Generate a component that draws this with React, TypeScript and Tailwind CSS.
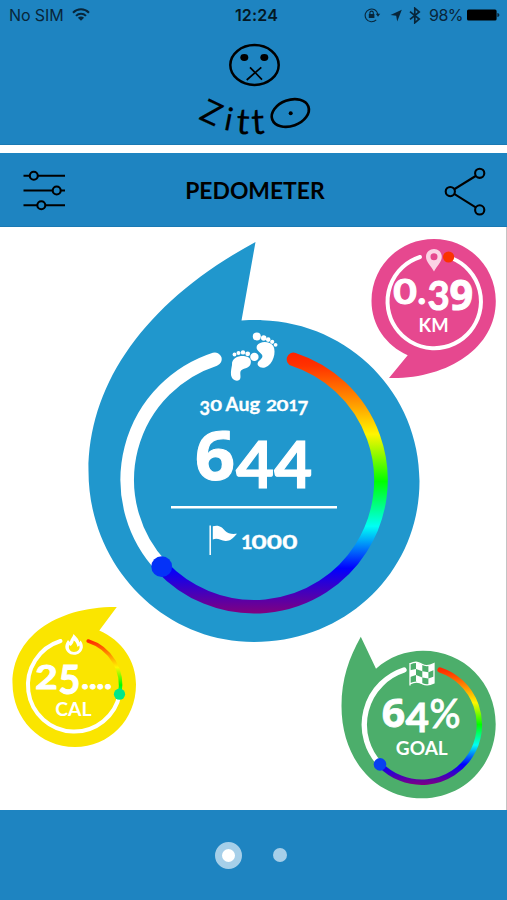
import type { ReactNode } from "react";

type Glyph = { c: string; x: number; base: number; h: number; w: number };

/** Numbers with old-style figures: every figure has its own height and baseline. */
function Figures({ glyphs, bold = 0.6 }: { glyphs: Glyph[]; bold?: number }) {
  return (
    <text fill="#fff" stroke="#fff" strokeWidth={bold} className="font-['Lato',sans-serif] font-bold">
      {glyphs.map((g, i) => (
        <tspan
          key={i}
          x={g.x}
          y={g.base}
          fontSize={g.h / 0.73}
          textLength={g.w}
          lengthAdjust="spacingAndGlyphs"
          className={g.c === "6" || g.c === "9" ? "font-['Open_Sans',sans-serif]" : undefined}
        >
          {g.c}
        </tspan>
      ))}
    </text>
  );
}

function Label({ x, y, size, width, children }: { x: number; y: number; size: number; width: number; children: string }) {
  return (
    <text
      x={x}
      y={y}
      fontSize={size}
      textLength={width}
      lengthAdjust="spacingAndGlyphs"
      fill="#fff"
      className="font-['Lato',sans-serif] font-bold"
    >
      {children}
    </text>
  );
}

function Rainbow({ id, top, bottom }: { id: string; top: number; bottom: number }) {
  return (
    <linearGradient id={id} gradientUnits="userSpaceOnUse" x1="0" x2="0" y1={top} y2={bottom}>
      <stop offset="0" stopColor="#ff1e00" />
      <stop offset="0.06" stopColor="#ff3200" />
      <stop offset="0.17" stopColor="#ff8000" />
      <stop offset="0.32" stopColor="#fff500" />
      <stop offset="0.5" stopColor="#00ff00" />
      <stop offset="0.67" stopColor="#00fff5" />
      <stop offset="0.83" stopColor="#0000ff" />
      <stop offset="1" stopColor="#800080" />
    </linearGradient>
  );
}

function Bubble({ className, viewBox, children }: { className: string; viewBox: string; children: ReactNode }) {
  return (
    <svg className={`absolute ${className}`} viewBox={viewBox} fill="none">
      {children}
    </svg>
  );
}

function StepsBubble() {
  return (
    <Bubble className="left-[80px] top-[8px] h-[415px] w-[350px]" viewBox="80 235 350 415">
      <defs>
        <Rainbow id="steps" top={350} bottom={613} />
      </defs>
      <path
        fill="#2097cd"
        d="M255.5 242 241.5 320.5C250 320 258 320 262 320.2C350 323 419.5 394 419.5 481C419.5 572 346 642 254 642C162 642 88.5 565 88.5 471C88.5 383 146 301 255.5 242Z"
      />
      <g strokeWidth="13.6">
        <path stroke="#fff" strokeLinecap="round" d="M214.9 359.2A126.8 126.8 0 0 0 161.5 566.5" />
        <path stroke="url(#steps)" strokeLinecap="round" d="M293.5 359.4A126.8 126.8 0 1 1 161.5 566.5" />
      </g>
      <circle cx="161.7" cy="566.7" r="10.4" fill="#0432f8" />
      <g fill="#fff">
        <circle cx="234.5" cy="354.5" r="1.9" />
        <circle cx="238.5" cy="353" r="2" />
        <circle cx="243" cy="352.4" r="2.2" />
        <circle cx="247.7" cy="353.8" r="2.4" />
        <circle cx="254.4" cy="356.9" r="4.2" />
        <path d="M232 365C231.5 357.5 239 355.6 245 356.2C250.5 356.8 252 361 250.2 365C248 369 241.5 368.3 240.5 371.5C239.8 374.5 241.5 377.5 239.5 379.8C236.5 382 232 380 231 375C230.7 371 231.5 368 232 365Z" />
        <circle cx="256.8" cy="336.4" r="4" />
        <circle cx="263.7" cy="338" r="2.7" />
        <circle cx="268.2" cy="339.6" r="2.3" />
        <circle cx="272.2" cy="341.8" r="2.1" />
        <circle cx="275.6" cy="344.8" r="1.9" />
        <path d="M257 345.5C260 340.5 270 340.8 273.3 346C276.5 352 273.5 364.5 265 367.4C260 368.6 256 365.5 258.2 361.8C260.5 359.4 263.8 357.5 261.8 354.5C259.5 351.5 255.3 350 257 345.5Z" />
      </g>
      <Figures
        bold={0.3}
        glyphs={[
          { c: "3", x: 199.5, base: 414.6, h: 13.6, w: 10.5 },
          { c: "0", x: 210.3, base: 411.3, h: 10.8, w: 11.8 },
          { c: " ", x: 222, base: 411.3, h: 13, w: 4 },
          { c: "A", x: 225.6, base: 411.3, h: 13.2, w: 13 },
          { c: "u", x: 238.5, base: 411.3, h: 13.6, w: 11 },
          { c: "g", x: 249.6, base: 411.3, h: 13.6, w: 10.6 },
          { c: " ", x: 260.5, base: 411.3, h: 13, w: 4 },
          { c: "2", x: 266, base: 411.3, h: 10.8, w: 11 },
          { c: "0", x: 276.6, base: 411.3, h: 10.8, w: 12 },
          { c: "1", x: 288.5, base: 411.3, h: 10.8, w: 9.5 },
          { c: "7", x: 297.5, base: 414.6, h: 13.6, w: 10.8 },
        ]}
      />
      <Figures
        bold={1.2}
        glyphs={[
          { c: "6", x: 195, base: 480.2, h: 48.5, w: 40 },
          { c: "4", x: 236, base: 488.4, h: 47, w: 38 },
          { c: "4", x: 274.2, base: 488.4, h: 47, w: 38 },
        ]}
      />
      <path stroke="#fff" strokeWidth="2.6" d="M171 507.2H337" />
      <path stroke="#fff" strokeWidth="1.5" d="M210.2 525.5V555" />
      <path fill="#fff" d="M212.8 526.3C219 524.5 222.5 527.5 225 530.8C228 534 232 534.2 237 533.8C233 538.5 230 541.2 225.5 541C220.5 540.6 218 537.6 212.8 539.5Z" />
      <Figures
        bold={0.4}
        glyphs={[
          { c: "1", x: 241, base: 548.6, h: 14, w: 11.5 },
          { c: "0", x: 251.4, base: 548.6, h: 14, w: 15.2 },
          { c: "0", x: 266.7, base: 548.6, h: 14, w: 15.2 },
          { c: "0", x: 282.3, base: 548.6, h: 14, w: 15.2 },
        ]}
      />
    </Bubble>
  );
}

function DistanceBubble() {
  return (
    <Bubble className="left-[366px] top-[7px] h-[150px] w-[136px]" viewBox="366 234 136 150">
      <path
        fill="#e6488f"
        d="M389 378 407.7 355.2C386 345.5 371.5 325 371.5 301C371.5 266.5 399 239 434 239C468 239 495.8 266.5 495.8 301C495.8 349 446 379.5 389 378Z"
      />
      <path stroke="#fff" strokeWidth="4" strokeLinecap="round" d="M420 257A46.7 46.7 0 1 0 452.5 258.5" />
      <circle cx="448.6" cy="257" r="5.6" fill="#fb3300" />
      <path
        fill="#fbd3e5"
        fillRule="evenodd"
        d="M434 249C429.5 249 426 252.4 426 256.8C426 262 431 266 434 271.5C437 266 441.8 262 441.8 256.8C441.8 252.4 438.5 249 434 249ZM434 253.2A3.5 3.5 0 1 1 434 260.2A3.5 3.5 0 1 1 434 253.2Z"
      />
      <Figures
        bold={1}
        glyphs={[
          { c: "0", x: 393.3, base: 304.1, h: 24.4, w: 23.6 },
          { c: ".", x: 417.5, base: 304, h: 26, w: 8.6 },
          { c: "3", x: 427.6, base: 309.6, h: 29.4, w: 22.2 },
          { c: "9", x: 449.6, base: 309.6, h: 29.8, w: 23.6 },
        ]}
      />
      <Label x={418.6} y={331.5} size={18} width={30}>KM</Label>
    </Bubble>
  );
}

function CaloriesBubble() {
  return (
    <Bubble className="left-[6px] top-[374px] h-[152px] w-[136px]" viewBox="6 601 136 152">
      <defs>
        <Rainbow id="calories" top={636} bottom={734} />
      </defs>
      <path
        fill="#fae500"
        d="M116.8 607 99.3 630.5C122 640.5 136 661 136 684.5C136 720 109 747 75 747C40 747 12.5 719 12.5 683C12.5 638 55 606.5 116.8 607Z"
      />
      <path stroke="#fff" strokeWidth="4" strokeLinecap="round" d="M60.5 641A46.3 46.3 0 1 0 119.7 694" />
      <path stroke="url(#calories)" strokeWidth="3.6" strokeLinecap="round" d="M88.2 641A46.3 46.3 0 0 1 119.7 694" />
      <circle cx="119.5" cy="694.2" r="5.6" fill="#00e889" />
      <path
        fill="#fff"
        fillRule="evenodd"
        d="M73.5 634C77 637.5 79 639.5 79.3 642.5L80.5 640.5C82.5 643 83 645 82.8 647.5C82 652 78.5 654.8 74 654.8C69 654.8 65.3 651 65.3 646.5C65.5 643.5 67 641.5 68 640L69.8 642C70.5 638.5 73 637 73.5 634ZM73.8 640.5C73.5 643.5 71.5 645 70.5 646L69.3 645C67.8 648.5 70.3 652 74 652C78 652 80.5 648.8 79.3 645.5L77.5 647C77 644.5 76.2 642 73.8 640.5Z"
      />
      <Figures
        bold={1}
        glyphs={[
          { c: "2", x: 35.2, base: 688.8, h: 24, w: 22.4 },
          { c: "5", x: 58.4, base: 694, h: 29, w: 21.8 },
          { c: "....", x: 81.3, base: 688.8, h: 22, w: 30.5 },
        ]}
      />
      <Label x={55.3} y={716} size={18} width={36.3}>CAL</Label>
    </Bubble>
  );
}

function GoalBubble() {
  return (
    <Bubble className="left-[336px] top-[404px] h-[170px] w-[165px]" viewBox="336 631 165 170">
      <defs>
        <Rainbow id="goal" top={664} bottom={785} />
      </defs>
      <path
        fill="#4cae6b"
        d="M360.8 636.8 376 668.8C389 657 406 650.8 423 650.8C464 650.8 495.7 683 495.7 724C495.7 766 463 798.3 422 798.3C376 798.3 341.5 760 341.5 706C341.5 679 349 658 360.8 636.8Z"
      />
      <g strokeWidth="5.4" strokeLinecap="round">
        <path stroke="#fff" d="M404 670A57.6 57.6 0 0 0 380 764.3" />
        <path stroke="url(#goal)" d="M440 670A57.6 57.6 0 1 1 380 764.3" />
      </g>
      <circle cx="380" cy="764.4" r="6.3" fill="#0840f0" />
      <path stroke="#fff" strokeWidth="1.3" d="M410 663V685.5M410 663.8C416 661 419 662.5 422.5 664.5C426 666.5 430 665.5 434 663.6V683C430 685 426 685.5 422.5 683.8C418 681 414.5 681.5 410 683.8" />
      <path fill="#fff" d="M416 662.3 422.3 664.5V671.2L416 669ZM428.4 665.8 434 663.8V670L428.4 672.3ZM410 670.3 416 669V675L410 677ZM422.3 671.2 428.4 672.3V678.6L422.3 677.5ZM416 675 422.3 677.5V684L416 681.6ZM428.4 678.6 434 676.5V683L428.4 685Z" />
      <Figures
        bold={0.8}
        glyphs={[
          { c: "6", x: 381.8, base: 727.2, h: 29, w: 23.4 },
          { c: "4", x: 405.5, base: 732.4, h: 29.2, w: 23.5 },
        ]}
      />
      <text
        x="429.5"
        y="728"
        fontSize="40"
        textLength="31"
        lengthAdjust="spacingAndGlyphs"
        fill="#fff"
        stroke="#fff"
        strokeWidth="0.8"
        className="font-['Lato',sans-serif] font-medium"
      >
        %
      </text>
      <Label x={395.8} y={755.4} size={18.2} width={52}>GOAL</Label>
    </Bubble>
  );
}

function StatusBar() {
  return (
    <div className="flex h-[30px] items-center justify-between pl-[9px] pr-[7px] font-['Inter',sans-serif] text-[#08263a]">
      <div className="flex w-[199px] items-center gap-[8px]">
        <span className="text-[16px] tracking-[-0.1px]">No SIM</span>
        <svg className="-mt-[2px] h-[13px] w-[18px]" viewBox="0 0 18 13" fill="none" stroke="currentColor" strokeWidth="2">
          <path d="M1 4.8C5.5 0.2 12.5 0.2 17 4.8M4 7.9C6.8 5 11.2 5 14 7.9" />
          <path d="M9 12.8 5.9 9.7C7.6 8.1 10.4 8.1 12.1 9.7Z" fill="currentColor" stroke="none" />
        </svg>
      </div>
      <span className="pl-[4px] text-[16px] font-semibold tracking-[0.2px] text-[#041824]">12:24</span>
      <div className="flex w-[199px] items-center justify-end">
        <svg className="mr-[9px] h-[16px] w-[17px]" viewBox="0 0 17 16" fill="none" stroke="currentColor">
          <path strokeWidth="1.1" d="M12.2 12.8A6.4 6.4 0 1 1 13.9 7.4" />
          <path fill="currentColor" stroke="none" d="M11.8 6.8H16.2L14 9.8ZM4.8 7H10.4V11H4.8Z" />
          <path strokeWidth="1.1" d="M5.9 7V5.8A1.7 1.7 0 0 1 9.3 5.8V7" />
        </svg>
        <svg className="mr-[7px] h-[13px] w-[12px]" viewBox="0 0 12 13" fill="currentColor">
          <path d="M11.8 0.8 7.2 12.4 6.2 6.8 0.5 6Z" />
        </svg>
        <svg className="mr-[8px] h-[17px] w-[12px]" viewBox="0 0 12 17" fill="none" stroke="currentColor" strokeWidth="1.7">
          <path d="M1 4.6 10.2 12 5.8 15.8V1.2L10.2 5 1 12.4" />
        </svg>
        <span className="mr-[4px] text-[16px] tracking-[-0.5px]">98%</span>
        <svg className="h-[12px] w-[33px]" viewBox="0 0 33 12">
          <rect x="0" y="0.4" width="29.6" height="11.2" rx="1.6" fill="#000" />
          <path d="M30.4 4C33 4.6 33 7.4 30.4 8Z" fill="#08263a" />
        </svg>
      </div>
    </div>
  );
}

function Logo() {
  return (
    <svg className="mx-auto mt-[10px] h-[100px] w-[127px] font-['Lato',sans-serif]" viewBox="190 40 127 100" fill="none" stroke="#000">
      <ellipse cx="254.5" cy="65" rx="24.2" ry="19.9" strokeWidth="2.5" />
      <g fill="#000" stroke="none">
        <ellipse cx="244.3" cy="57.5" rx="4" ry="3.4" />
        <ellipse cx="264.3" cy="57.5" rx="4" ry="3.4" />
        <circle cx="290.7" cy="113.3" r="2" />
      </g>
      <path strokeWidth="1.7" d="M250 67.3 262 79.6M261.3 67.3 246.7 80" />
      <g fill="#000" strokeWidth="0.2" fontSize="32">
        <text transform="translate(198 118.8) rotate(25)">Z</text>
        <text transform="translate(223 129.5) rotate(11)">i</text>
        <text transform="translate(235.8 133.6) rotate(4)" fontSize="36">t</text>
        <text transform="translate(252.2 134.6) rotate(-4)" fontSize="36">t</text>
      </g>
      <ellipse cx="290.3" cy="113" rx="19.2" ry="13" strokeWidth="2.7" transform="rotate(-20 290.3 113)" />
    </svg>
  );
}

export default function App() {
  return (
    <div className="flex h-[900px] w-[507px] flex-col overflow-hidden bg-white">
      <header className="h-[145px] shrink-0 border-b border-[#1a79b3] bg-[#1e84c1]">
        <StatusBar />
        <Logo />
      </header>

      <nav className="mt-[8px] flex h-[74px] shrink-0 items-center justify-between border-b border-[#1a79b3] bg-[#1e84c1] pl-[23px] pr-[21px] pt-[2px]">
        <button aria-label="Settings">
          <svg className="h-[42px] w-[43px]" viewBox="23 170 43 42" fill="#1e84c1" stroke="#000" strokeWidth="2.1">
            <path d="M23.5 175.7H65M23.5 190.5H65M23.5 205.2H65" />
            <circle cx="33.8" cy="175.7" r="4" />
            <circle cx="56.7" cy="190.5" r="4" />
            <circle cx="41.3" cy="205.2" r="4" />
          </svg>
        </button>
        <h1 className="font-['Lato',sans-serif]">
          <svg className="h-[38px] w-[142px]" viewBox="184 171.5 142 38">
            <text x="185.2" y="198.6" fontSize="22.6" textLength="139.5" lengthAdjust="spacingAndGlyphs" className="font-bold">
              PEDOMETER
            </text>
          </svg>
        </h1>
        <button aria-label="Share">
          <svg className="h-[50px] w-[42px]" viewBox="444 165 42 50" fill="#1e84c1" stroke="#000" strokeWidth="2.1">
            <path d="M479.7 172.5 450.5 190.6 479.7 208.8" fill="none" />
            <circle cx="479.7" cy="172.3" r="4.6" />
            <circle cx="450.3" cy="190.6" r="4.6" />
            <circle cx="479.7" cy="208.9" r="4.6" />
          </svg>
        </button>
      </nav>

      <main className="relative grow border-r border-[#c4c4c4]">
        <StepsBubble />
        <DistanceBubble />
        <CaloriesBubble />
        <GoalBubble />
      </main>

      <footer className="flex h-[90px] shrink-0 items-center gap-[31px] bg-[#1e84c1] pl-[215px]">
        <span className="size-[27px] rounded-full border-[7px] border-[#a6cfe9] bg-white" />
        <span className="size-[14px] rounded-full bg-[#a6cfe9]" />
      </footer>
    </div>
  );
}
